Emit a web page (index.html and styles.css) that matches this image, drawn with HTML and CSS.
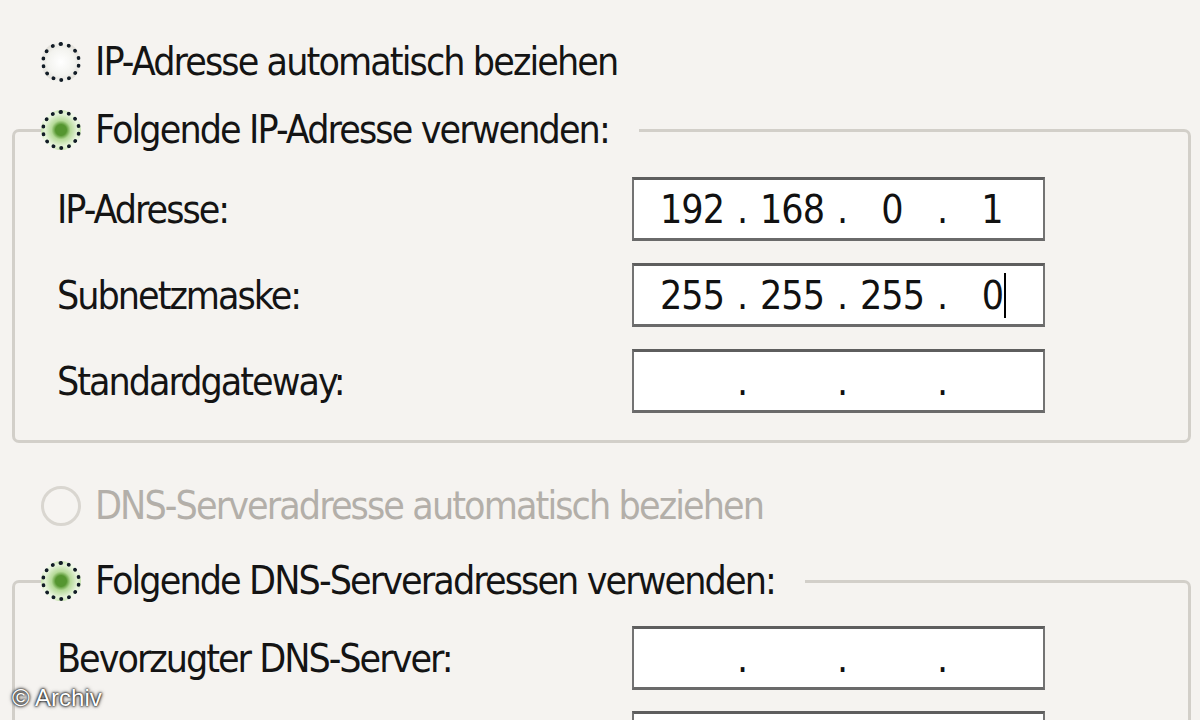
FILE: index.html
```
<!DOCTYPE html>
<html lang="de">
<head>
<meta charset="utf-8">
<title>Internetprotokoll (TCP/IP)</title>
<link rel="stylesheet" href="styles.css">
</head>
<body>
<div class="dialog">
  <div class="opt first"><span class="radio"></span><span class="txt">IP-Adresse automatisch beziehen</span></div>

  <fieldset class="group g1">
    <legend class="opt"><span class="radio checked"></span><span class="txt">Folgende IP-Adresse verwenden:</span></legend>
    <div class="row">
      <span class="label">IP-Adresse:</span>
      <div class="ip"><span class="seg">192</span><span class="dot">.</span><span class="seg">168</span><span class="dot">.</span><span class="seg">0</span><span class="dot">.</span><span class="seg">1</span></div>
    </div>
    <div class="row">
      <span class="label">Subnetzmaske:</span>
      <div class="ip"><span class="seg">255</span><span class="dot">.</span><span class="seg">255</span><span class="dot">.</span><span class="seg">255</span><span class="dot">.</span><span class="seg"><span class="caret">0</span></span></div>
    </div>
    <div class="row">
      <span class="label">Standardgateway:</span>
      <div class="ip"><span class="seg"></span><span class="dot">.</span><span class="seg"></span><span class="dot">.</span><span class="seg"></span><span class="dot">.</span><span class="seg"></span></div>
    </div>
  </fieldset>

  <div class="opt disabled"><span class="radio"></span><span class="txt">DNS-Serveradresse automatisch beziehen</span></div>

  <fieldset class="group g2">
    <legend class="opt"><span class="radio checked"></span><span class="txt">Folgende DNS-Serveradressen verwenden:</span></legend>
    <div class="row">
      <span class="label">Bevorzugter DNS-Server:</span>
      <div class="ip"><span class="seg"></span><span class="dot">.</span><span class="seg"></span><span class="dot">.</span><span class="seg"></span><span class="dot">.</span><span class="seg"></span></div>
    </div>
    <div class="row">
      <span class="label"></span>
      <div class="ip"></div>
    </div>
  </fieldset>
</div>
<div class="credit">© Archiv</div>
</body>
</html>
```
FILE: styles.css
```
html, body {
  margin: 0;
  padding: 0;
  height: 100%;
  overflow: hidden;
}
body {
  background: #f5f3f0;
  font-family: "DejaVu Sans Condensed", "DejaVu Sans", sans-serif;
  font-size: 39px;
  letter-spacing: -1.9px;
  color: #141414;
  position: relative;
}
.dialog {
  padding-top: 42px;
}
.opt {
  display: flex;
  align-items: center;
  height: 40px;
  line-height: 40px;
  white-space: nowrap;
}
.dialog > .opt {
  padding-left: 41px;
}
.radio {
  box-sizing: border-box;
  width: 40px;
  height: 40px;
  border-radius: 50%;
  border: 4px dotted #121c26;
  background: radial-gradient(circle at 50% 50%, #ffffff 0, #f3f3ef 60%, #d9d6cf 100%);
  margin-right: 14px;
  flex: none;
}
.radio.checked {
  background: radial-gradient(circle at 50% 50%, #559630 0, #559630 24%, #b5da98 42%, #e4f2d7 72%, #ffffff 100%);
}
.disabled {
  color: #b3afa9;
  margin-top: 43px;
}
.disabled .radio {
  border: 3px solid #d9d6d0;
  background: #f6f4f1;
}
.group {
  margin: 0 9px 0 12px;
  border: 3px solid #d2cfc9;
  border-radius: 7px;
  padding: 27px 0 27px 0;
  min-width: 0;
}
.g1 {
  margin-top: 28px;
}
.g2 {
  margin-top: 35px;
  padding-top: 25px;
  border-bottom: none;
  border-radius: 7px 7px 0 0;
}
.group legend {
  margin-left: 26px;
  padding: 0 30px 0 0;
}
.row {
  display: flex;
  align-items: center;
  padding-left: 42px;
}
.row + .row {
  margin-top: 22px;
}
.g2 .row + .row {
  margin-top: 21px;
}
.label {
  width: 575px;
  flex: none;
  white-space: nowrap;
  letter-spacing: -2px;
}
.ip {
  box-sizing: border-box;
  width: 413px;
  height: 64px;
  background: #ffffff;
  border: 2px solid #737373;
  border-top: 3px solid #5e5e5e;
  border-bottom: 3px solid #6a6a6a;
  display: flex;
  align-items: center;
  padding-left: 14px;
  color: #111;
  letter-spacing: -1px;
}
.seg {
  width: 88px;
  text-align: center;
  flex: none;
}
.dot {
  width: 12px;
  text-align: center;
  flex: none;
}
.caret {
  border-right: 2px solid #000;
  padding-right: 1px;
  margin-left: 4px;
}
.credit {
  position: absolute;
  left: 12px;
  top: 684px;
  font-family: "Liberation Sans", sans-serif;
  font-size: 24px;
  letter-spacing: 0;
  color: #ffffff;
  text-shadow: 0 0 2px #000, 0 0 3px #333, 0 0 4px #555;
}
```
